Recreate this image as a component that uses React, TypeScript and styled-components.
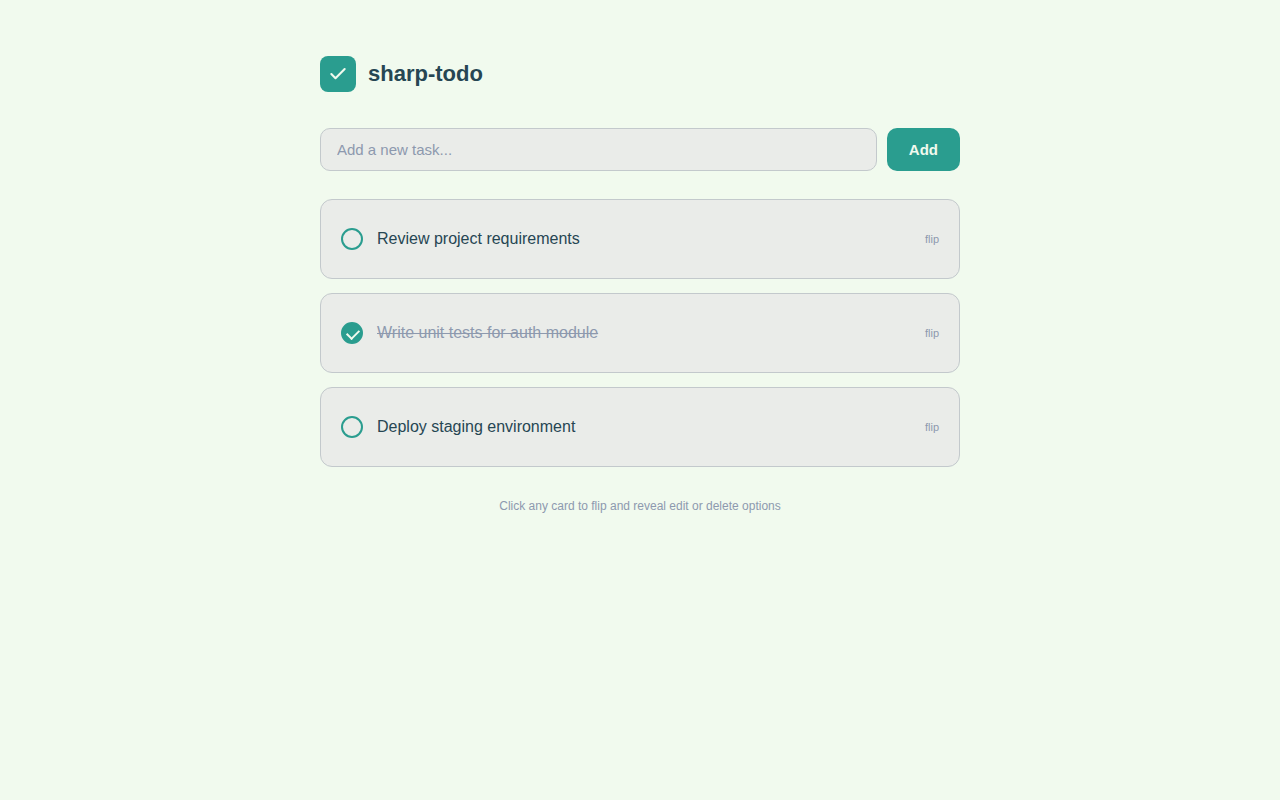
import React, { useState } from "react";
import styled, { createGlobalStyle } from "styled-components";

const GlobalStyle = createGlobalStyle`
  *, *::before, *::after { box-sizing: border-box; }
  body {
    margin: 0;
    background: #f1faee;
    color: #264653;
    font-family: "Liberation Sans", Arial, sans-serif;
  }
`;

const Page = styled.main`
  max-width: 680px;
  margin: 0 auto;
  padding: 56px 20px;
`;

const Header = styled.header`
  display: flex;
  align-items: center;
  gap: 12px;
  margin-bottom: 36px;
`;

const Logo = styled.span`
  display: flex;
  align-items: center;
  justify-content: center;
  width: 36px;
  height: 36px;
  border-radius: 8px;
  background: #2a9d8f;
`;

const Title = styled.h1`
  margin: 0;
  font-size: 22px;
  font-weight: 700;
`;

const AddForm = styled.form`
  display: flex;
  gap: 10px;
  margin-bottom: 28px;
`;

const TaskInput = styled.input`
  flex: 1;
  min-width: 0;
  padding: 12px 16px;
  border: 1px solid #c3c9cc;
  border-radius: 10px;
  background: #eaece9;
  color: #264653;
  font: inherit;
  font-size: 15px;
  outline: none;

  &::placeholder { color: #8d99ae; }
  &:focus { border-color: #2a9d8f; }
`;

const AddButton = styled.button`
  padding: 12px 22px;
  border: none;
  border-radius: 10px;
  background: #2a9d8f;
  color: #f1faee;
  font: inherit;
  font-size: 15px;
  font-weight: 700;
  cursor: pointer;
`;

const TaskList = styled.ul`
  display: flex;
  flex-direction: column;
  gap: 14px;
  margin: 0;
  padding: 0;
  list-style: none;
`;

const Card = styled.li`
  display: flex;
  align-items: center;
  gap: 14px;
  min-height: 80px;
  padding: 0 20px;
  border: 1px solid #c3c9cc;
  border-radius: 12px;
  background: #eaece9;
`;

const Check = styled.input`
  display: grid;
  place-items: center;
  flex: none;
  appearance: none;
  width: 22px;
  height: 22px;
  margin: 0;
  border: 2px solid #2a9d8f;
  border-radius: 50%;
  cursor: pointer;

  &:checked { background: #2a9d8f; }
  &:checked::after {
    content: "";
    width: 8px;
    height: 12px;
    margin-left: 2px;
    border: solid #f1faee;
    border-width: 0 2px 2px 0;
    transform: rotate(45deg);
  }
`;

const TaskLabel = styled.label<{ $done: boolean }>`
  flex: 1;
  font-size: 16px;
  color: ${(p) => (p.$done ? "#8d99ae" : "#264653")};
  text-decoration: ${(p) => (p.$done ? "line-through" : "none")};
`;

const FlipButton = styled.button`
  padding: 0;
  border: none;
  background: none;
  color: #8d99ae;
  font: inherit;
  font-size: 11px;
  cursor: pointer;
`;

const Hint = styled.p`
  margin: 32px 0 0;
  color: #8d99ae;
  font-size: 12px;
  text-align: center;
`;

const initialTasks = [
  { id: 1, text: "Review project requirements", done: false },
  { id: 2, text: "Write unit tests for auth module", done: true },
  { id: 3, text: "Deploy staging environment", done: false },
];

export default function App() {
  const [tasks, setTasks] = useState(initialTasks);
  const [draft, setDraft] = useState("");

  const addTask = (event: React.FormEvent) => {
    event.preventDefault();
    const text = draft.trim();
    if (!text) return;
    setTasks([...tasks, { id: Date.now(), text, done: false }]);
    setDraft("");
  };

  const toggle = (id: number) =>
    setTasks(tasks.map((t) => (t.id === id ? { ...t, done: !t.done } : t)));

  return (
    <>
      <GlobalStyle />
      <Page>
        <Header>
          <Logo>
            <svg
              width="20"
              height="20"
              viewBox="0 0 24 24"
              fill="none"
              stroke="#f1faee"
              strokeWidth="2.5"
              strokeLinecap="round"
              strokeLinejoin="round"
              aria-hidden="true"
            >
              <path d="M20 6 9 17l-5-5" />
            </svg>
          </Logo>
          <Title>sharp-todo</Title>
        </Header>
        <AddForm onSubmit={addTask}>
          <TaskInput
            type="text"
            aria-label="New task"
            placeholder="Add a new task..."
            value={draft}
            onChange={(e) => setDraft(e.target.value)}
          />
          <AddButton type="submit">Add</AddButton>
        </AddForm>
        <TaskList>
          {tasks.map((task) => (
            <Card key={task.id}>
              <Check
                type="checkbox"
                id={`task-${task.id}`}
                checked={task.done}
                onChange={() => toggle(task.id)}
              />
              <TaskLabel htmlFor={`task-${task.id}`} $done={task.done}>
                {task.text}
              </TaskLabel>
              <FlipButton type="button">flip</FlipButton>
            </Card>
          ))}
        </TaskList>
        <Hint>Click any card to flip and reveal edit or delete options</Hint>
      </Page>
    </>
  );
}
